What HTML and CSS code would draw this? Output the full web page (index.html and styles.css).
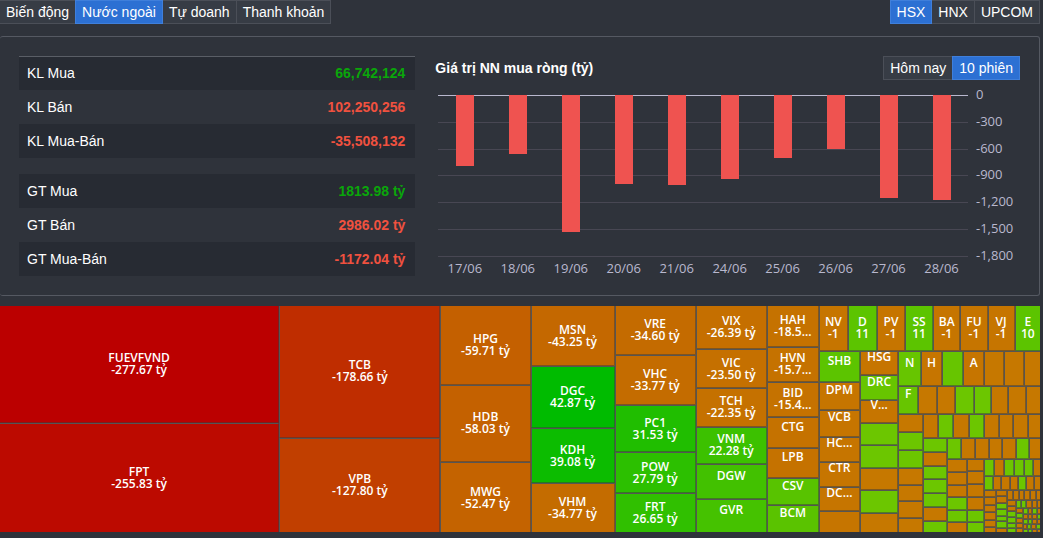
FILE: index.html
```html
<!DOCTYPE html>
<html lang="vi">
<head>
<meta charset="utf-8">
<title>Nước ngoài - HSX</title>
<link rel="stylesheet" href="styles.css">
</head>
<body>
<header class="toolbar">
  <nav class="btn-group flush" aria-label="Loại dữ liệu">
    <button class="btn">Biến động</button>
    <button class="btn active">Nước ngoài</button>
    <button class="btn">Tự doanh</button>
    <button class="btn">Thanh khoản</button>
  </nav>
  <div class="btn-group" role="group" aria-label="Sàn">
    <button class="btn active">HSX</button>
    <button class="btn">HNX</button>
    <button class="btn">UPCOM</button>
  </div>
</header>

<main class="content">
  <section class="panel">
    <div class="summary">
      <table class="stats ruled">
        <tr><th scope="row">KL Mua</th><td class="up">66,742,124</td></tr>
        <tr><th scope="row">KL Bán</th><td class="down">102,250,256</td></tr>
        <tr><th scope="row">KL Mua-Bán</th><td class="down">-35,508,132</td></tr>
      </table>
      <table class="stats">
        <tr><th scope="row">GT Mua</th><td class="up">1813.98 tỷ</td></tr>
        <tr><th scope="row">GT Bán</th><td class="down">2986.02 tỷ</td></tr>
        <tr><th scope="row">GT Mua-Bán</th><td class="down">-1172.04 tỷ</td></tr>
      </table>
    </div>
    <div class="chart">
      <div class="chart-head">
        <h2 class="chart-title">Giá trị NN mua ròng (tỷ)</h2>
        <div class="btn-group" role="group" aria-label="Khoảng thời gian">
          <button class="btn">Hôm nay</button>
          <button class="btn active">10 phiên</button>
        </div>
      </div>
      <div class="chart-body">
        <div class="plot">
          <div class="gridlines"><i></i><i></i><i></i><i></i><i></i><i></i><i></i></div>
          <div class="bars" id="bars"></div>
        </div>
        <div class="y-axis"><span>0</span><span>-300</span><span>-600</span><span>-900</span><span>-1,200</span><span>-1,500</span><span>-1,800</span></div>
        <div class="x-axis"><span>17/06</span><span>18/06</span><span>19/06</span><span>20/06</span><span>21/06</span><span>24/06</span><span>25/06</span><span>26/06</span><span>27/06</span><span>28/06</span></div>
      </div>
    </div>
  </section>

  <section class="treemap" id="treemap" aria-label="Giá trị mua bán ròng theo mã"></section>
</main>
<script src="treemap.js"></script>
</body>
</html>
```

FILE: styles.css
```css
* { box-sizing: border-box; }

body {
  margin: 0;
  min-height: 100vh;
  display: flex;
  flex-direction: column;
  padding: 0 3px 6px 0;
  background: #2f333b;
  color: #fff;
  font: 14px/20px "Liberation Sans", Arial, sans-serif;
}

.toolbar { display: flex; justify-content: space-between; }

.btn-group { display: flex; }
.btn-group.flush { margin-left: -1px; }

.btn {
  height: 24px;
  padding: 0 6px;
  border: 1px solid #4b4f58;
  background: #373c45;
  color: #fff;
  font: inherit;
  cursor: pointer;
}
.btn + .btn { margin-left: -1px; }
.btn.active {
  position: relative;
  background: #2c70d3;
  border-color: #3f7fdb;
}

.content {
  flex: 1;
  display: flex;
  flex-direction: column;
  gap: 10px;
  margin-top: 12px;
}

.panel {
  display: grid;
  grid-template-columns: 40fr 59fr;
  column-gap: 20px;
  padding: 19px;
  border: 1px solid #555962;
  border-left: 0;
  border-radius: 3px;
}

.summary { display: flex; flex-direction: column; gap: 16px; }

.stats { width: 100%; border-collapse: collapse; }
.stats tr { height: 34px; }
.stats tr:nth-child(odd) { background: #272b33; }
.stats.ruled tr:first-child { box-shadow: inset 0 1px #5a5e66; }
.stats th { padding: 0 8px; text-align: left; font-weight: 400; }
.stats td { padding: 0 10px; text-align: right; font-weight: 700; }
.up { color: #0aa60a; }
.down { color: #f0513f; }

.chart { display: flex; flex-direction: column; }
.chart-head { display: flex; justify-content: space-between; align-items: center; }
.chart-title { margin: 0; font-size: 14px; font-weight: 700; }

.chart-body {
  display: grid;
  grid-template-columns: 1fr 44px;
  grid-template-rows: 162px 19px;
  column-gap: 8px;
  padding: 15px 0 0 3px;
  color: #b9b8ce;
  font: 13px/22px "Open Sans", "Noto Sans", sans-serif;
}

.plot { display: grid; }
.gridlines, .bars { grid-area: 1 / 1; }
.gridlines { display: flex; flex-direction: column; justify-content: space-between; }
.gridlines i { height: 1px; background: #484753; }
.gridlines i:first-child { background: #b9b8ce; }

.bars { display: grid; grid-template-columns: repeat(10, 1fr); justify-items: center; }
.bar { width: 18px; background: #ef5350; }

.y-axis { display: flex; flex-direction: column; justify-content: space-between; margin: -1px 0 1px; }
.y-axis span { height: 1px; line-height: 0; }

.x-axis { display: grid; grid-template-columns: repeat(10, 1fr); text-align: center; }

.treemap {
  flex: 1;
  min-height: 226px;
  display: flex;
  overflow: hidden;
  font: 600 12px/12px "Open Sans", "Noto Sans", sans-serif;
}
.treemap > .group { margin: -1px; }

.group { display: flex; flex-basis: 0; min-width: 0; min-height: 0; }
.group.col { flex-direction: column; }

.cell {
  display: flex;
  flex-basis: 0;
  min-width: 0;
  min-height: 0;
  align-items: center;
  justify-content: center;
  border: 1px solid #555;
  border-right-color: rgba(60, 60, 60, .5);
  border-bottom-color: rgba(60, 60, 60, .5);
}

.label {
  flex: none;
  height: 24px;
  text-align: center;
  white-space: nowrap;
}
.label span { display: block; }
```

FILE: treemap.js
```
// Net value per session, billions of VND.
const sessions = [-791, -650, -1525, -990, -1004, -932, -703, -600, -1142, -1172];
document.getElementById('bars').innerHTML = sessions
  .map(v => `<div class="bar" style="height:${-v / 18}%"></div>`)
  .join('');

const row = (size, ...kids) => ({ dir: 'row', size, kids });
const col = (size, ...kids) => ({ dir: 'col', size, kids });
const cell = (size, color, ...lines) => ({ size, color, lines });

// Unlabelled cells: "o" is a net sell, "g" a net buy.
const fill = { o: '#c67800', g: '#6cc600' };
const plain = (colors, sizes) => [...colors].map((c, i) => cell(sizes[i], fill[c]));

const S = '#c57200', T = '#c67500', G = '#5cc400', H = '#67c500';

const data = row(1,
  col(280, cell(118, '#bb0000', 'FUEVFVND', '-277.67 tỷ'), cell(109, '#bc0a00', 'FPT', '-255.83 tỷ')),
  col(161, cell(132, '#bf2d00', 'TCB', '-178.66 tỷ'), cell(94, '#c13f00', 'VPB', '-127.80 tỷ')),
  col(90, cell(79, '#c46000', 'HPG', '-59.71 tỷ'), cell(77, '#c46100', 'HDB', '-58.03 tỷ'), cell(70, '#c46300', 'MWG', '-52.47 tỷ')),
  col(84, cell(61, '#c46800', 'MSN', '-43.25 tỷ'), cell(61, '#00bb00', 'DGC', '42.87 tỷ'), cell(55, '#0cbc00', 'KDH', '39.08 tỷ'), cell(49, '#c46c00', 'VHM', '-34.77 tỷ')),
  col(81, cell(50, '#c46b00', 'VRE', '-34.60 tỷ'), cell(50, '#c46c00', 'VHC', '-33.77 tỷ'), cell(46, '#20be00', 'PC1', '31.53 tỷ'), cell(41, '#2cc000', 'POW', '27.79 tỷ'), cell(39, '#30c000', 'FRT', '26.65 tỷ')),
  col(71, cell(44, '#c56f00', 'VIX', '-26.39 tỷ'), cell(39, '#c57000', 'VIC', '-23.50 tỷ'), cell(38, '#c57100', 'TCH', '-22.35 tỷ'), cell(37, '#3cc100', 'VNM', '22.28 tỷ'), cell(35, '#42c100', 'DGW'), cell(33, '#45c200', 'GVR')),
  col(52, cell(42, S, 'HAH', '-18.5...'), cell(35, S, 'HVN', '-15.7...'), cell(35, S, 'BID', '-15.4...'), cell(31, S, 'CTG'), cell(29, S, 'LPB'), cell(27, '#58c300', 'CSV'), cell(27, '#5ac300', 'BCM')),
  col(222,
    row(46, cell(29, T, 'NV', '-1'), cell(29, G, 'D', '11'), cell(28, T, 'PV', '-1'), cell(28, G, 'SS', '11'), cell(27, T, 'BA', '-1'), cell(27, T, 'FU', '-1'), cell(27, T, 'VJ', '-1'), cell(26, G, 'E', '10')),
    row(180,
      col(41, cell(31, G, 'SHB'), cell(28, T, 'DPM'), cell(26, T, 'VCB'), cell(25, T, 'HC...'), cell(25, T, 'CTR'), cell(23, T, 'DC...'), cell(22, T)),
      col(38, cell(24, T, 'HSG'), cell(24, H, 'DRC'), cell(23, T, 'V...'), ...plain('ggogo', [22, 23, 22, 22, 20])),
      col(142,
        row(34, cell(23, H, 'N'), cell(21, T, 'H'), cell(21, H), cell(21, T, 'A'), ...plain('ooo', [20, 19, 17])),
        row(28, cell(20, H, 'F'), ...plain('ooggooo', [19, 18, 19, 17, 17, 17, 15])),
        row(118,
          col(25, ...plain('oggoooo', [18, 18, 18, 17, 16, 16, 15])),
          col(117,
            row(24, ...plain('ogogoooo', [15, 15, 16, 15, 14, 14, 15, 13])),
            row(94,
              col(24, ...plain('gogggog', [14, 14, 13, 14, 13, 14, 12])),
              col(93,
                row(21, ...plain('goooogo', [14, 14, 13, 14, 13, 13, 12])),
                row(73,
                  col(19, ...plain('oooggo', [13, 13, 12, 12, 12, 11])),
                  col(17, ...plain('oooogg', [12, 13, 12, 13, 12, 11])),
                  col(57,
                    row(16, ...plain('gogggo', [11, 10, 10, 10, 8, 8])),
                    row(14, ...plain('gooogoo', [9, 9, 9, 8, 8, 7, 7])),
                    row(43,
                      col(12, ...plain('oooooo', [8, 7, 8, 8, 6, 6])),
                      col(11, ...plain('ooggggo', [6, 7, 7, 7, 5, 6, 5])),
                      col(34,
                        row(10, ...plain('oooooo', [6, 6, 5, 6, 6, 5])),
                        row(33,
                          col(9, ...plain('oogggg', [6, 6, 6, 5, 5, 5])),
                          col(25,
                            row(8, ...plain('ggooo', [5, 5, 6, 5, 4])),
                            row(25,
                              col(7, ...plain('ogooo', [5, 5, 5, 5, 5])),
                              col(18,
                                row(6, ...plain('gogo', [5, 4, 5, 4])),
                                row(5, ...plain('ooog', [5, 4, 5, 4])),
                                row(5, ...plain('ggoo', [5, 4, 5, 4])),
                                row(5, ...plain('ogog', [4, 4, 5, 5])),
                                row(4, ...plain('ggoo', [5, 4, 5, 4]))))))))))))))))));

function render(node) {
  const el = document.createElement('div');
  el.style.flexGrow = node.size;
  if (node.kids) {
    el.className = 'group ' + node.dir;
    el.append(...node.kids.map(render));
    return el;
  }
  el.className = 'cell';
  el.style.backgroundColor = node.color;
  if (node.lines.length) {
    const label = document.createElement('div');
    label.className = 'label';
    node.lines.forEach(text => {
      const line = document.createElement('span');
      line.textContent = text;
      label.append(line);
    });
    el.append(label);
  }
  return el;
}

document.getElementById('treemap').append(render(data));
```
